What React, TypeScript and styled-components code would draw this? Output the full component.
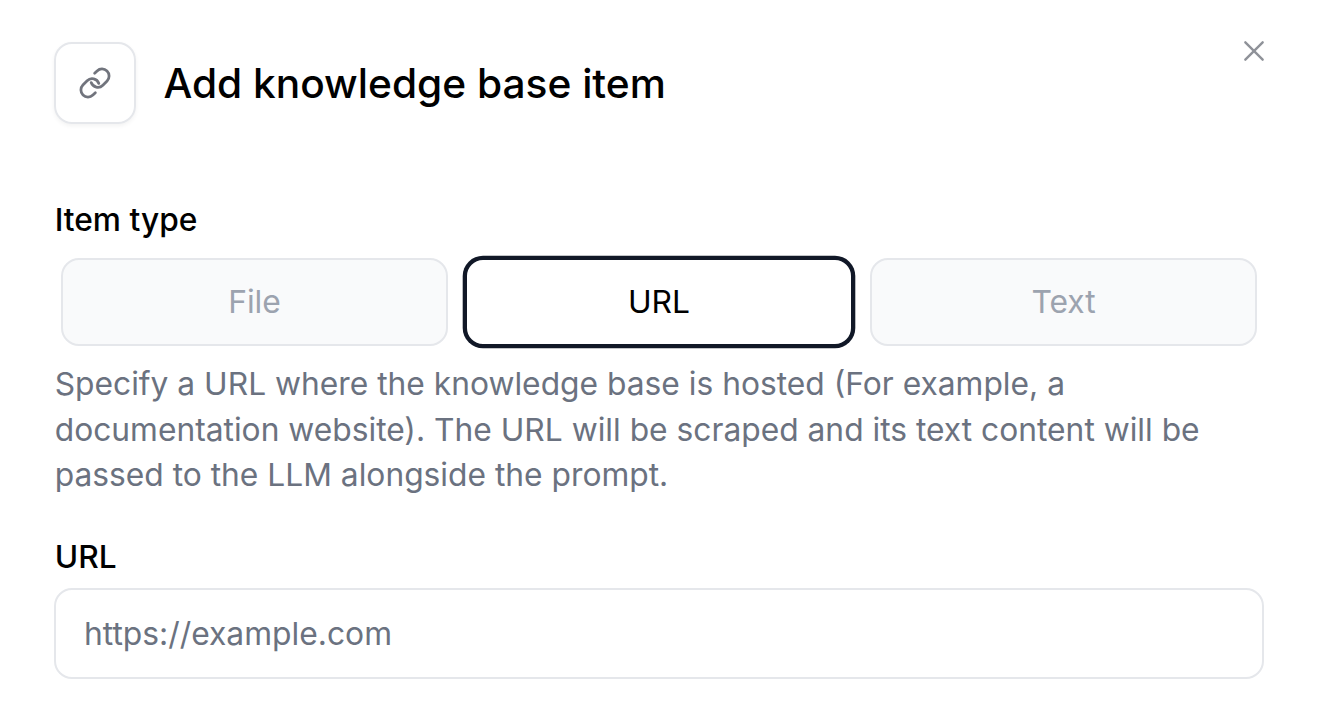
import React from "react";
import styled, { createGlobalStyle } from "styled-components";

const GlobalStyle = createGlobalStyle`
  * { box-sizing: border-box; }
  body { margin: 0; background: #fff; font-family: Inter, sans-serif; color: #000; }
`;

const Dialog = styled.main`
  height: 726px;
  padding: 42px 54px 0;
  display: flex;
  flex-direction: column;
  overflow: hidden;
`;

const Header = styled.header`
  display: flex;
  align-items: flex-start;
  height: 82px;
`;

const IconTile = styled.div`
  width: 82px;
  height: 82px;
  flex: none;
  display: flex;
  align-items: center;
  justify-content: center;
  border: 2px solid #e5e7eb;
  border-radius: 18px;
  color: #71747d;
  box-shadow: 0 2px 4px rgba(0, 0, 0, 0.05);
`;

const Title = styled.h1`
  margin: 0 0 0 27.5px;
  flex: 1;
  font-size: 40.65px;
  line-height: 84px;
  font-weight: 500;
  white-space: nowrap;
`;

const CloseButton = styled.button`
  padding: 0;
  border: 0;
  margin: -7px -6px 0 0;
  width: 32px;
  height: 32px;
  background: none;
  color: #8f9299;
  display: flex;
`;

const Label = styled.label`
  display: block;
  padding-left: 0.7px;
  font-size: 31.7px;
  line-height: 40px;
  font-weight: 500;
`;

const TypeSection = styled.section`
  margin-top: 76px;
`;

const Options = styled.div`
  display: grid;
  grid-template-columns: 387px 388px 387px;
  justify-content: space-between;
  padding: 0 7px;
  margin-top: 18px;
`;

const Option = styled.button<{ $selected?: boolean }>`
  height: 88px;
  padding: 0;
  font: 400 31.8px/40px Inter, sans-serif;
  border-radius: 18px;
  border: 2px solid ${(p) => (p.$selected ? "#111827" : "#e5e7eb")};
  box-shadow: ${(p) => (p.$selected ? "0 0 0 2.3px #111827" : "none")};
  background: ${(p) => (p.$selected ? "#fff" : "#f9fafb")};
  color: ${(p) => (p.$selected ? "#000" : "#9ca3af")};
`;

const Hint = styled.p`
  margin: 15px 0 0;
  padding-left: 0.7px;
  font-size: 31.75px;
  line-height: 45.5px;
  color: #6b7280;
  white-space: nowrap;
`;

const UrlSection = styled.section`
  margin-top: 39px;
`;

const UrlInput = styled.input`
  display: block;
  width: 100%;
  height: 91px;
  margin-top: 11px;
  padding: 0 28px;
  border: 2px solid #e5e7eb;
  border-radius: 18px;
  font: 400 31.8px/40px Inter, sans-serif;
  outline: none;
  &::placeholder { color: #6b7280; opacity: 1; }
`;

const LinkIcon = () => (
  <svg width="34" height="34" viewBox="0 0 24 24" fill="none" stroke="currentColor" strokeWidth="1.95" strokeLinecap="round" strokeLinejoin="round">
    <path d="M9.3 11.7a5 5 0 0 0 8.24 1.84l3-3a5 5 0 0 0-7.07-7.07l-1.72 1.71" />
    <path d="M14.7 12.3a5 5 0 0 0-8.24-1.84l-3 3a5 5 0 0 0 7.07 7.07l1.72-1.71" />
  </svg>
);

const CloseIcon = () => (
  <svg width="32" height="32" viewBox="0 0 24 24" fill="none" stroke="currentColor" strokeWidth="1.8" strokeLinecap="round">
    <path d="M5.5 5.5l13 13M18.5 5.5l-13 13" />
  </svg>
);

export default function App() {
  return (
    <>
      <GlobalStyle />
      <Dialog>
        <Header>
          <IconTile><LinkIcon /></IconTile>
          <Title>Add knowledge base item</Title>
          <CloseButton aria-label="Close"><CloseIcon /></CloseButton>
        </Header>
        <TypeSection>
          <Label as="div">Item type</Label>
          <Options>
            <Option>File</Option>
            <Option $selected>URL</Option>
            <Option>Text</Option>
          </Options>
          <Hint>
            Specify a URL where the knowledge base is hosted (For example, a<br />
            documentation website). The URL will be scraped and its text content will be<br />
            passed to the LLM alongside the prompt.
          </Hint>
        </TypeSection>
        <UrlSection>
          <Label htmlFor="url">URL</Label>
          <UrlInput id="url" placeholder="https://example.com" />
        </UrlSection>
      </Dialog>
    </>
  );
}
